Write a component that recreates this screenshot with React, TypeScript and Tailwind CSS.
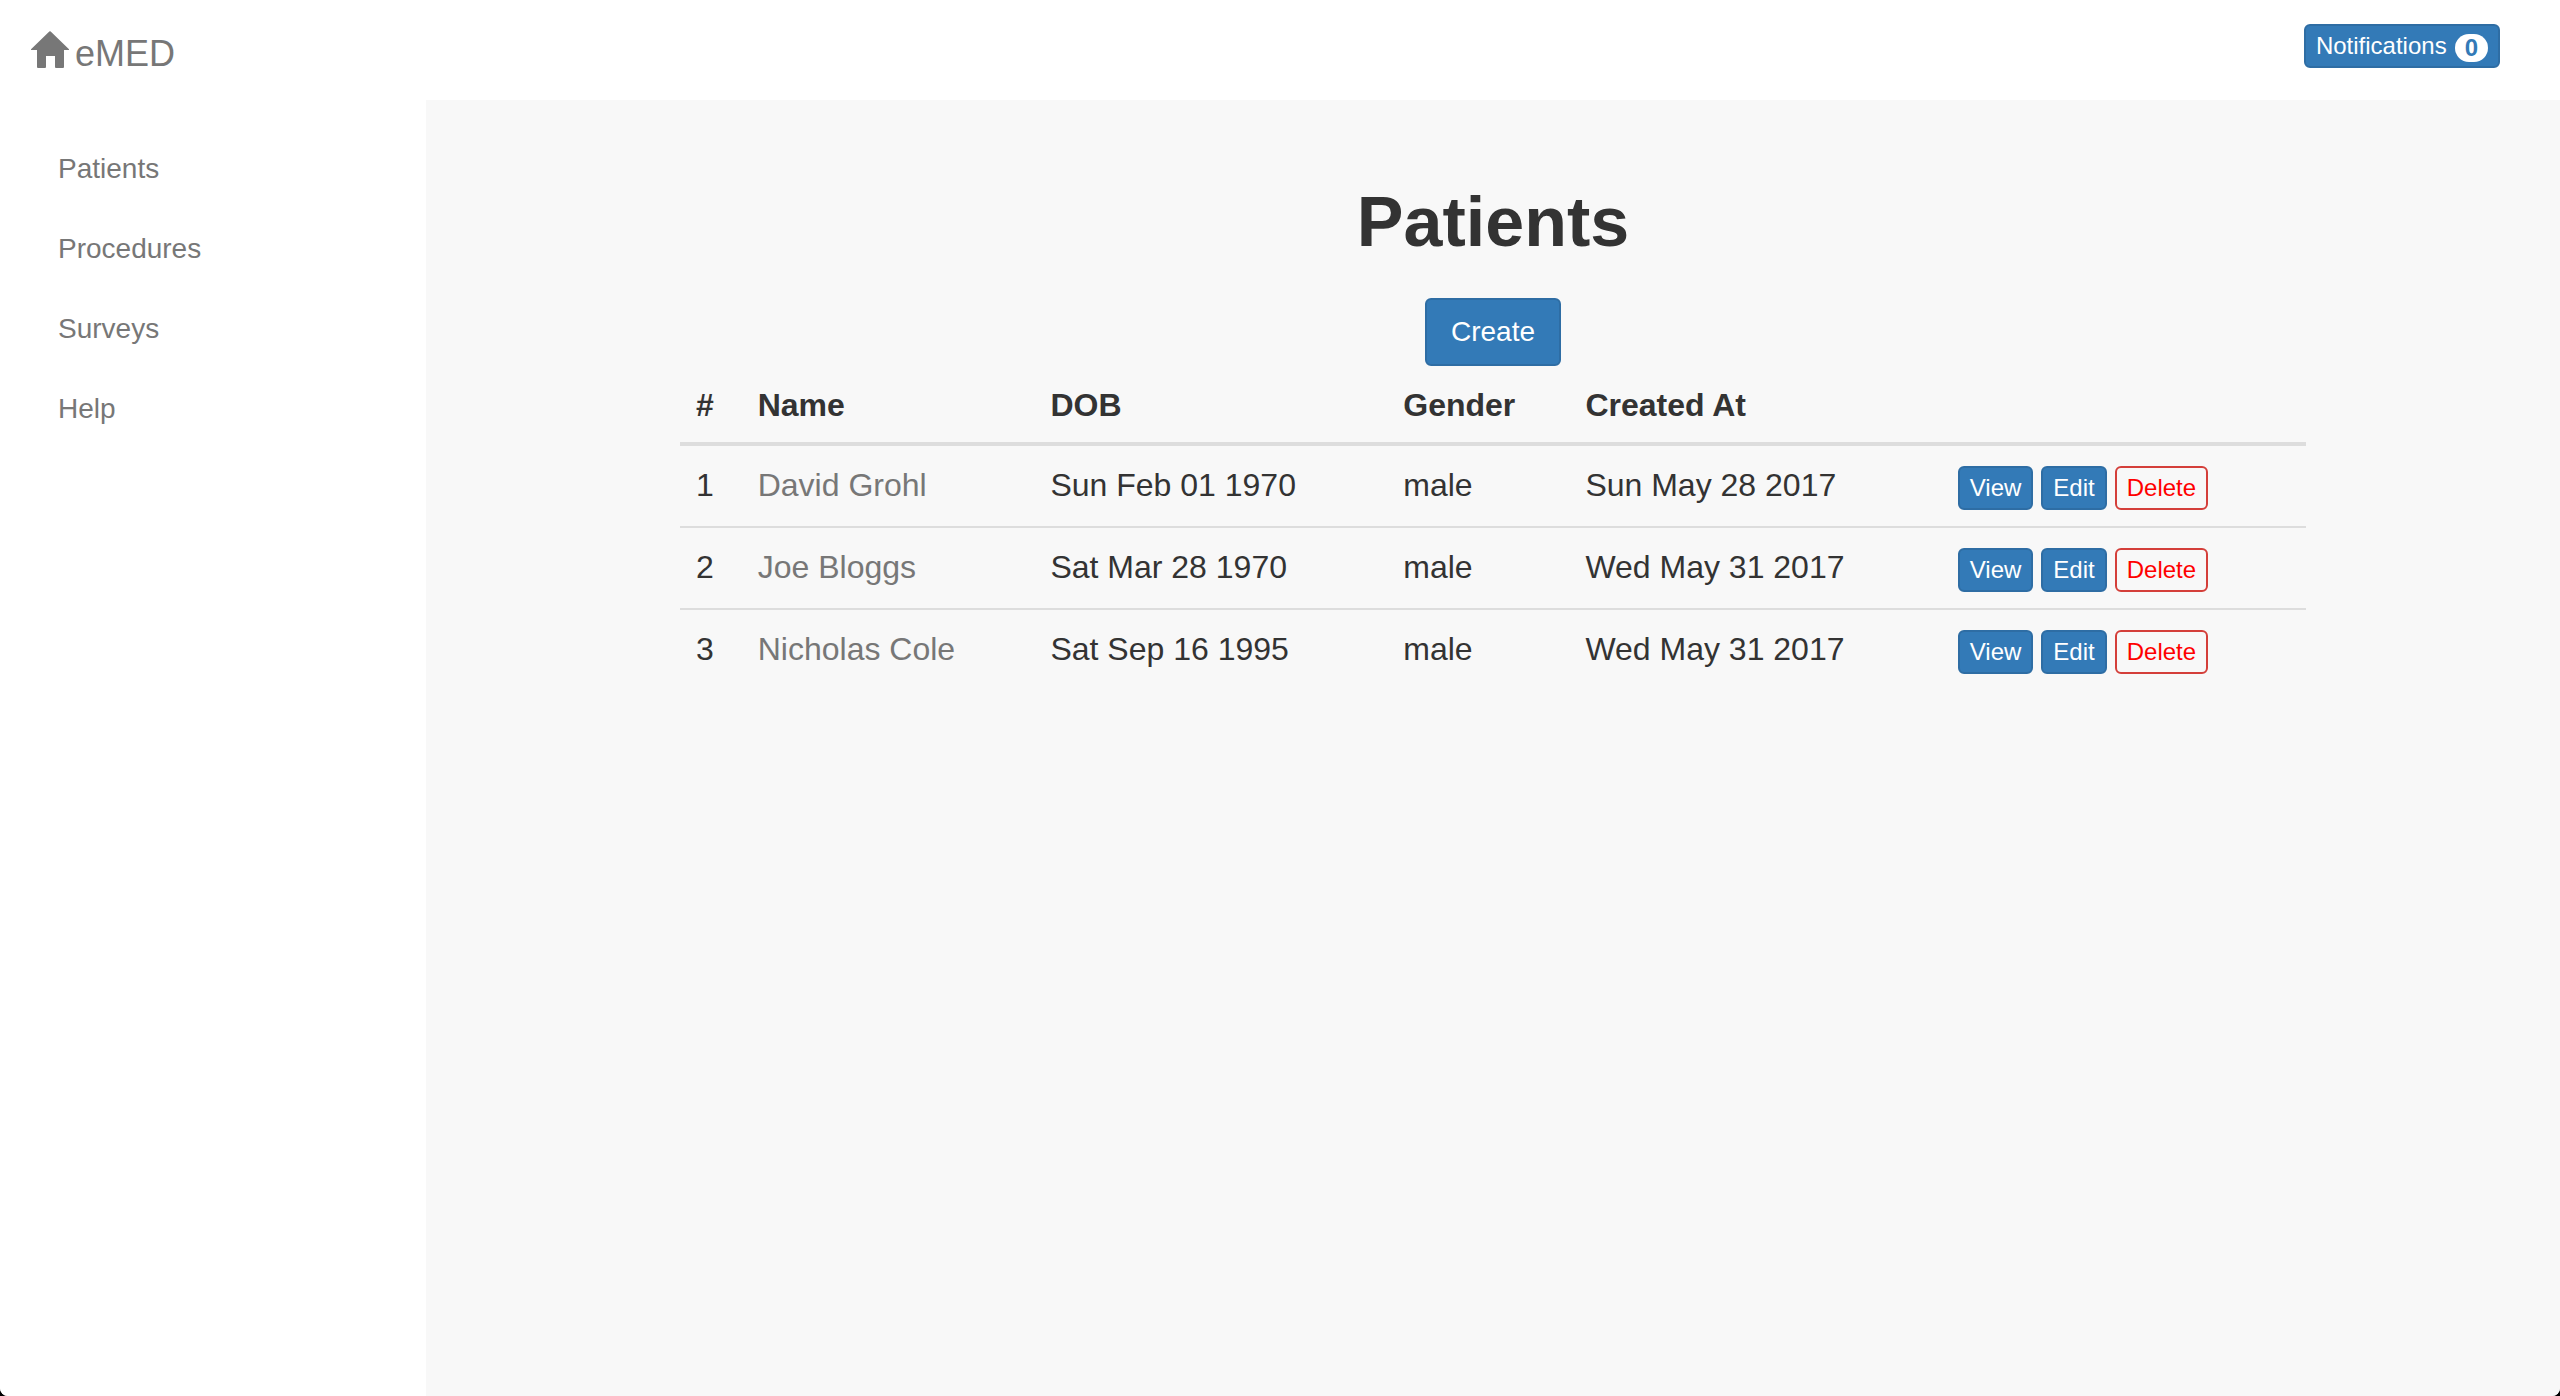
const patients = [
  { id: 1, name: "David Grohl", dob: "Sun Feb 01 1970", gender: "male", created: "Sun May 28 2017" },
  { id: 2, name: "Joe Bloggs", dob: "Sat Mar 28 1970", gender: "male", created: "Wed May 31 2017" },
  { id: 3, name: "Nicholas Cole", dob: "Sat Sep 16 1995", gender: "male", created: "Wed May 31 2017" },
];

const links = ["Patients", "Procedures", "Surveys", "Help"];

const primary = "rounded-md border-2 border-[#2e6da4] bg-[#337ab7] text-white";
const small = "h-11 px-2.5 text-2xl leading-10";

function HomeIcon() {
  return (
    <svg className="h-[38px] w-[38px]" viewBox="0 0 38 38" fill="#777777" aria-hidden="true">
      <path d="M18.3 .5q.7-.7 1.4 0L38 18.2q.4.8-.5.8H33v17q0 1-1 1h-7q-1 0-1-1V25H15v11q0 1-1 1H7q-1 0-1-1V19H.5q-.9 0-.5-.8z" />
    </svg>
  );
}

function Header() {
  return (
    <header className="flex h-[100px] items-start justify-between bg-white pl-[31px] pr-[60px]">
      <a href="#home" className="flex items-start gap-1.5 pt-[31px] text-4xl leading-[46px] text-[#777777]">
        <HomeIcon />
        eMED
      </a>
      <button type="button" className={`mt-6 flex items-center gap-2 ${primary} ${small}`}>
        Notifications
        <span className="mt-1 flex h-7 items-center rounded-full bg-white px-2.5 text-2xl font-bold text-[#337ab7]">
          0
        </span>
      </button>
    </header>
  );
}

function Sidebar() {
  return (
    <nav className="w-[16.64%] shrink-0 bg-white pt-7">
      <ul>
        {links.map((link) => (
          <li key={link}>
            <a href={`#${link.toLowerCase()}`} className="block px-[58px] pb-[18px] pt-5 text-[28px] leading-[42px] text-[#777777]">
              {link}
            </a>
          </li>
        ))}
      </ul>
    </nav>
  );
}

function PatientTable() {
  return (
    <table className="w-full table-fixed border-collapse text-left text-[32px] leading-[46px]">
      <colgroup>
        <col className="w-[3.8%]" />
        <col className="w-[18%]" />
        <col className="w-[21.7%]" />
        <col className="w-[11.2%]" />
        <col className="w-[22.9%]" />
        <col className="w-[22.4%]" />
      </colgroup>
      <thead>
        <tr className="border-b-4 border-[#dddddd]">
          {["#", "Name", "DOB", "Gender", "Created At"].map((title) => (
            <th key={title} scope="col" className="px-4 pb-3.5 pt-4 font-bold">
              {title}
            </th>
          ))}
          <td />
        </tr>
      </thead>
      <tbody>
        {patients.map((p) => (
          <tr key={p.id} className="border-b-2 border-[#dddddd] align-top last:border-b-0">
            <td className="px-4 pt-4">{p.id}</td>
            <td className="px-4 pt-4">
              <a href={`#patient-${p.id}`} className="text-[#777777]">
                {p.name}
              </a>
            </td>
            <td className="px-4 pt-4">{p.dob}</td>
            <td className="px-4 pt-4">{p.gender}</td>
            <td className="px-4 pt-4">{p.created}</td>
            <td className="px-4 pb-4 pt-5">
              <div className="flex gap-2">
                <button type="button" className={`${primary} ${small}`}>
                  View
                </button>
                <button type="button" className={`${primary} ${small}`}>
                  Edit
                </button>
                <button
                  type="button"
                  className={`rounded-md border-2 border-[#d43f3a] text-[#ff0000] ${small}`}
                >
                  Delete
                </button>
              </div>
            </td>
          </tr>
        ))}
      </tbody>
    </table>
  );
}

export default function App() {
  return (
    <div className="min-h-screen bg-black font-['Liberation_Sans',Arial,sans-serif] text-[#333333]">
      <div className="flex min-h-screen flex-col overflow-hidden rounded-b-lg bg-white">
        <Header />
        <div className="flex flex-1">
          <Sidebar />
          <main className="flex-1 bg-[#f8f8f8]">
            <div className="mx-auto flex w-[76.2%] flex-col items-center pt-[82px]">
              <h1 className="mb-9 text-[70px] font-bold leading-[80px]">Patients</h1>
              <button type="button" className={`h-[68px] px-6 text-[28px] leading-10 ${primary}`}>
                Create
              </button>
              <PatientTable />
            </div>
          </main>
        </div>
      </div>
    </div>
  );
}
